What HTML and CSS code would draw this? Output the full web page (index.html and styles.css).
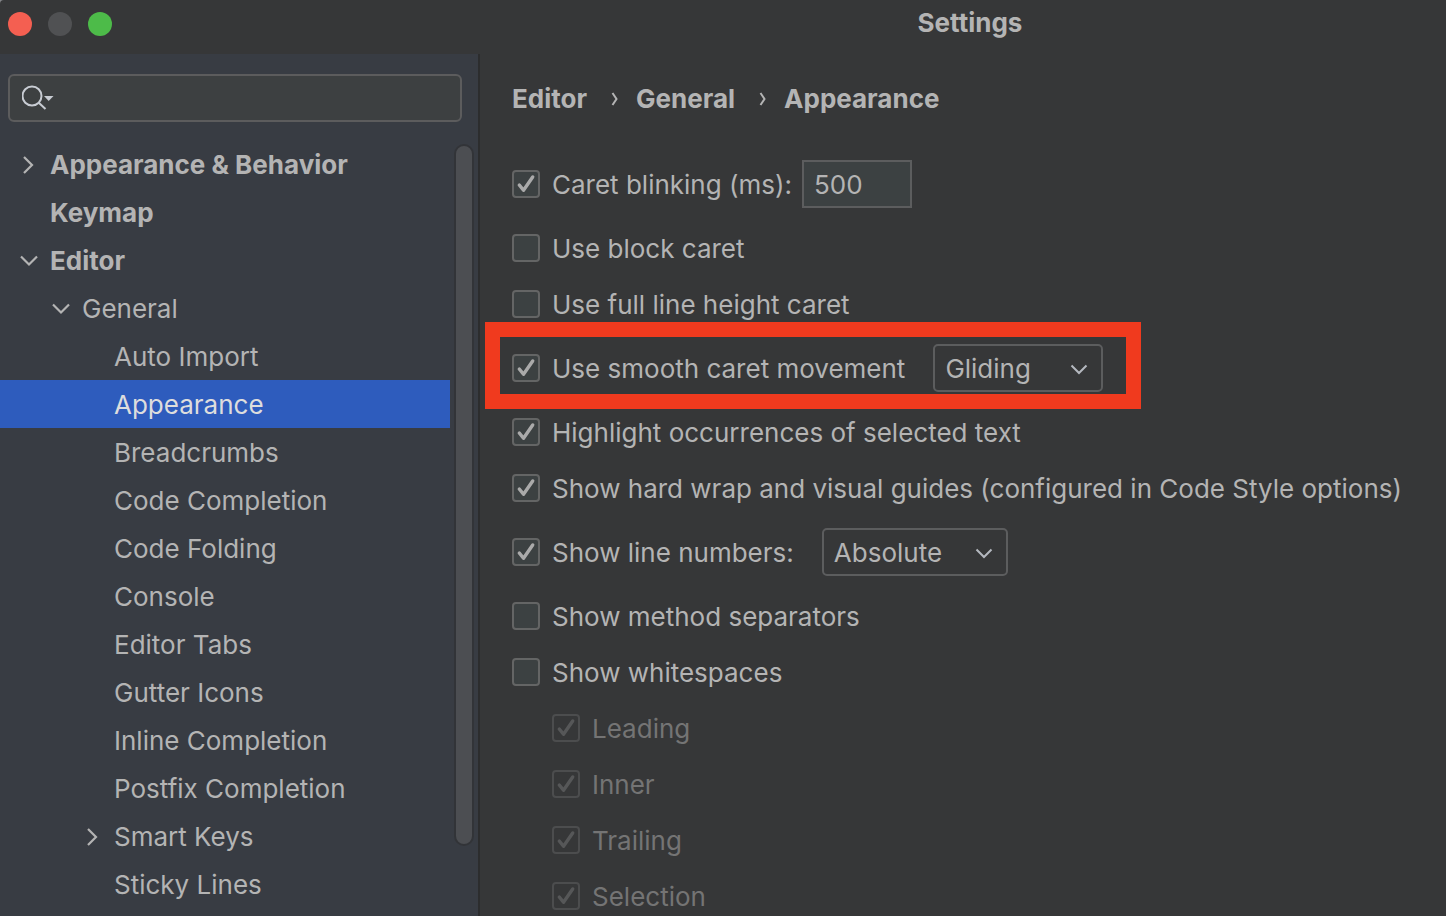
FILE: index.html
```html
<!DOCTYPE html>
<html lang="en">
<head>
<meta charset="utf-8">
<meta name="viewport" content="width=device-width, initial-scale=1">
<title>Settings</title>
<link rel="stylesheet" href="styles.css">
</head>
<body>
<svg class="defs" width="0" height="0" aria-hidden="true">
  <symbol id="right" viewBox="0 0 24 24"><path d="M8 4 16 12 8 20" fill="none" stroke="currentColor" stroke-width="2.200"/></symbol>
  <symbol id="down" viewBox="0 0 24 24"><path d="M5 7.500 13 15.500 21 7.500" fill="none" stroke="currentColor" stroke-width="2.200"/></symbol>
  <symbol id="combo-down" viewBox="0 0 24 24"><path d="M4.500 8.500 12 16 19.500 8.500" fill="none" stroke="currentColor" stroke-width="2"/></symbol>
</svg>
<div class="window">
  <header class="titlebar">
    <div class="lights">
      <button class="light close" aria-label="Close"></button>
      <button class="light minimize" aria-label="Minimize" disabled></button>
      <button class="light zoom" aria-label="Zoom"></button>
    </div>
    <h1 class="title">Settings</h1>
  </header>
  <div class="body">
    <aside class="sidebar">
      <div class="search">
        <svg class="search-icon" viewBox="0 0 34 26" aria-hidden="true"><circle cx="10" cy="11" r="9.500" fill="none" stroke="currentColor" stroke-width="2"/><path d="m16.500 17.500 7 6.500" fill="none" stroke="currentColor" stroke-width="2"/><path d="M22 11h9.500L26.700 16z" fill="currentColor"/></svg>
        <input class="search-input" type="text" aria-label="Search settings">
      </div>
      <div class="tree-area">
        <nav class="tree" aria-label="Settings categories">
          <ul class="list">
            <li class="row strong"><button class="toggle" aria-label="Expand Appearance &amp; Behavior"><svg><use href="#right"/></svg></button><a href="#">Appearance &amp; Behavior</a></li>
            <li class="row strong"><span class="toggle"></span><a href="#">Keymap</a></li>
            <li class="row strong"><button class="toggle" aria-label="Collapse Editor"><svg><use href="#down"/></svg></button><a href="#">Editor</a></li>
            <li class="row level-1"><button class="toggle" aria-label="Collapse General"><svg><use href="#down"/></svg></button><a href="#">General</a></li>
            <li class="row level-2"><span class="toggle"></span><a href="#">Auto Import</a></li>
            <li class="row level-2 selected"><span class="toggle"></span><a href="#" aria-current="page">Appearance</a></li>
            <li class="row level-2"><span class="toggle"></span><a href="#">Breadcrumbs</a></li>
            <li class="row level-2"><span class="toggle"></span><a href="#">Code Completion</a></li>
            <li class="row level-2"><span class="toggle"></span><a href="#">Code Folding</a></li>
            <li class="row level-2"><span class="toggle"></span><a href="#">Console</a></li>
            <li class="row level-2"><span class="toggle"></span><a href="#">Editor Tabs</a></li>
            <li class="row level-2"><span class="toggle"></span><a href="#">Gutter Icons</a></li>
            <li class="row level-2"><span class="toggle"></span><a href="#">Inline Completion</a></li>
            <li class="row level-2"><span class="toggle"></span><a href="#">Postfix Completion</a></li>
            <li class="row level-2"><button class="toggle" aria-label="Expand Smart Keys"><svg><use href="#right"/></svg></button><a href="#">Smart Keys</a></li>
            <li class="row level-2"><span class="toggle"></span><a href="#">Sticky Lines</a></li>
          </ul>
        </nav>
        <div class="scrollbar"><div class="thumb"></div></div>
      </div>
    </aside>
    <main class="content">
      <nav class="crumbs" aria-label="Breadcrumb">
        <a href="#">Editor</a>
        <svg class="sep" viewBox="0 0 8 16" aria-hidden="true"><path d="M1.500 2 5.500 8 1.500 14" fill="none" stroke="currentColor" stroke-width="2"/></svg>
        <a href="#">General</a>
        <svg class="sep" viewBox="0 0 8 16" aria-hidden="true"><path d="M1.500 2 5.500 8 1.500 14" fill="none" stroke="currentColor" stroke-width="2"/></svg>
        <a href="#">Appearance</a>
      </nav>
      <form class="options">
        <div class="option tall number">
          <label class="check"><input type="checkbox" checked><span>Caret blinking (ms):</span></label>
          <input class="field" type="text" value="500" aria-label="Caret blinking period in milliseconds">
        </div>
        <div class="option"><label class="check"><input type="checkbox"><span>Use block caret</span></label></div>
        <div class="option"><label class="check"><input type="checkbox"><span>Use full line height caret</span></label></div>
        <div class="option tall highlighted">
          <label class="check"><input type="checkbox" checked><span>Use smooth caret movement</span></label>
          <span class="combo gliding"><select aria-label="Caret movement"><option>Gliding</option><option>Snappy</option></select><svg><use href="#combo-down"/></svg></span>
        </div>
        <div class="option"><label class="check"><input type="checkbox" checked><span>Highlight occurrences of selected text</span></label></div>
        <div class="option"><label class="check"><input type="checkbox" checked><span>Show hard wrap and visual guides (configured in Code Style options)</span></label></div>
        <div class="option tall">
          <label class="check"><input type="checkbox" checked><span>Show line numbers:</span></label>
          <span class="combo numbering"><select aria-label="Line numbers"><option>Absolute</option><option>Relative</option></select><svg><use href="#combo-down"/></svg></span>
        </div>
        <div class="option"><label class="check"><input type="checkbox"><span>Show method separators</span></label></div>
        <div class="option"><label class="check"><input type="checkbox"><span>Show whitespaces</span></label></div>
        <div class="option nested"><label class="check"><input type="checkbox" checked disabled><span>Leading</span></label></div>
        <div class="option nested"><label class="check"><input type="checkbox" checked disabled><span>Inner</span></label></div>
        <div class="option nested"><label class="check"><input type="checkbox" checked disabled><span>Trailing</span></label></div>
        <div class="option nested"><label class="check"><input type="checkbox" checked disabled><span>Selection</span></label></div>
      </form>
    </main>
  </div>
</div>
</body>
</html>
```

FILE: styles.css
```css
* { box-sizing: border-box; }

html { background: #85878a; }

body {
  margin: 0;
  font: 26px/32px Inter, "Liberation Sans", sans-serif;
  color: #b4b4b4;
}

a { color: inherit; text-decoration: none; }
button, input, select { font: inherit; color: inherit; margin: 0; }
button { border: 0; padding: 0; background: none; }

.defs { position: absolute; }

.window {
  display: flex;
  flex-direction: column;
  height: 100vh;
  overflow: hidden;
  background: #363738;
  border-top-left-radius: 4px;
}

.titlebar {
  display: grid;
  grid-template-columns: 480px 1fr;
  flex: none;
  height: 54px;
}

.lights { display: flex; gap: 16px; padding: 12px 8px; }
.light { width: 24px; height: 24px; border-radius: 50%; }
.close { background: #f45f51; }
.minimize { background: #505153; }
.zoom { background: #4dbb49; }

.title {
  margin: 0;
  padding: 7px 0 0 14px;
  font-size: 26px;
  font-weight: 700;
  line-height: 32px;
  text-align: center;
}

.body { display: grid; grid-template-columns: 480px 1fr; flex: 1; min-height: 0; }

.sidebar {
  display: flex;
  flex-direction: column;
  gap: 18px;
  min-height: 0;
  padding-top: 20px;
  background: #383c43;
  border-right: 2px solid #2c2d2e;
}

.search {
  display: flex;
  align-items: center;
  flex: none;
  gap: 8px;
  height: 48px;
  margin: 0 16px 0 8px;
  padding: 0 12px;
  background: #3d4041;
  border: 2px solid #5c5c5d;
  border-radius: 6px;
}
.search-icon { flex: none; width: 34px; height: 26px; color: #c8ccd3; }
.search-input { flex: 1; min-width: 0; border: 0; outline: 0; background: none; }

.tree-area { display: flex; flex: 1; min-height: 0; }
.tree { flex: 1; min-width: 0; overflow: hidden; }
.list { margin: 0; padding: 0; list-style: none; }

.row { display: flex; align-items: center; gap: 10px; height: 48px; padding-left: 16px; padding-top: 1px; }
.level-1 { padding-left: 48px; }
.level-2 { padding-left: 80px; }
.strong { font-weight: 700; }
.selected { background: #2e5cbd; color: #dddddd; }
.toggle { width: 24px; height: 24px; }
.toggle svg { display: block; width: 24px; height: 24px; }

.scrollbar { width: 28px; padding: 4px 4px 70px; }
.thumb { height: 100%; border: 2px solid #323438; border-radius: 10px; background: #4c4e52; }

.content { min-width: 0; padding: 29px 0 0 32px; overflow: hidden; }

.crumbs { display: flex; align-items: center; font-weight: 700; }
.sep { width: 8px; height: 16px; margin: 0 17px 0 24px; }

.options { padding-top: 33px; }

.option {
  position: relative;
  display: flex;
  align-items: center;
  width: fit-content;
  height: 56px;
  gap: 28px;
  white-space: nowrap;
}
.tall { height: 72px; }
.number { gap: 10px; }
.nested { margin-left: 40px; color: #747474; }

.highlighted::after {
  content: "";
  position: absolute;
  inset: -10px -38px -5px -27px;
  border: 15px solid #f03a1e;
  pointer-events: none;
}

.check { display: flex; align-items: center; gap: 12px; }
.check span { padding-top: 2px; }
.check input {
  appearance: none;
  width: 28px;
  height: 28px;
  border: 2px solid #646565;
  border-radius: 4px;
  background: #3c4142;
}
.check input:checked {
  background: #3c4142 url("data:image/svg+xml,%3Csvg xmlns='http://www.w3.org/2000/svg' viewBox='0 0 24 24'%3E%3Cpath d='M5.300 13 9.500 18.300 18.700 5' fill='none' stroke='%23aaaaaa' stroke-width='3.400' stroke-linecap='round' stroke-linejoin='round'/%3E%3C/svg%3E") center / 24px 24px no-repeat;
}
.check input:disabled {
  border-color: #4c4d4e;
  background-color: #363738;
  background-image: url("data:image/svg+xml,%3Csvg xmlns='http://www.w3.org/2000/svg' viewBox='0 0 24 24'%3E%3Cpath d='M5.300 13 9.500 18.300 18.700 5' fill='none' stroke='%23565758' stroke-width='3.400' stroke-linecap='round' stroke-linejoin='round'/%3E%3C/svg%3E");
}

.field {
  width: 110px;
  height: 48px;
  padding: 0 10px;
  border: 2px solid #5c5d5e;
  background: #3c4142;
}

.combo { position: relative; display: block; }
.combo select {
  appearance: none;
  display: block;
  width: 100%;
  height: 48px;
  padding: 2px 40px 0 10px;
  border: 2px solid #5c5d5e;
  border-radius: 5px;
  background: #363738;
}
.combo svg {
  position: absolute;
  top: 13px;
  right: 12px;
  width: 24px;
  height: 24px;
  color: #b4b8bf;
  pointer-events: none;
}
.gliding { width: 170px; }
.numbering { width: 186px; }
```
